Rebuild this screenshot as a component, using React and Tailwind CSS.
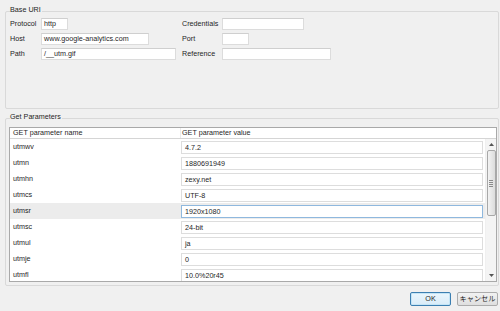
const params = [
  { name: 'utmwv', value: '4.7.2' },
  { name: 'utmn', value: '1880691949' },
  { name: 'utmhn', value: 'zexy.net' },
  { name: 'utmcs', value: 'UTF-8' },
  { name: 'utmsr', value: '1920x1080', selected: true },
  { name: 'utmsc', value: '24-bit' },
  { name: 'utmul', value: 'ja' },
  { name: 'utmje', value: '0' },
  { name: 'utmfl', value: '10.0%20r45' },
];

const Field = ({ value, width }) => (
  <div
    className="h-[12px] bg-white border border-[#dcdcdc] border-t-[#cfcfcf] pl-[2px] flex items-center leading-none"
    style={{ width }}
  >
    {value}
  </div>
);

const Label = ({ children }) => (
  <div className="h-[12px] flex items-center leading-none">{children}</div>
);

export default function App() {
  return (
    <div className="w-[500px] h-[311px] bg-[#f0f0f0] overflow-hidden pl-[5px] pr-[1px] text-[7.2px] text-[#1f1f1f] font-['Liberation_Sans','Noto_Sans_CJK_JP',sans-serif]">
      {/* Base URI */}
      <div className="relative mt-[11px] h-[98px] border border-[#d9d9d9] rounded-[2px]">
        <div className="absolute -top-[6px] left-[4px] leading-none bg-[#f0f0f0] pr-[1px]">Base URI</div>
        <div className="grid grid-cols-[31px_141px_40px_1fr] gap-y-[3px] pt-[6px] pl-[4px]">
          <Label>Protocol</Label>
          <Field value="http" width={27} />
          <Label>Credentials</Label>
          <Field value="" width={82} />

          <Label>Host</Label>
          <Field value="www.google-analytics.com" width={108} />
          <Label>Port</Label>
          <Field value="" width={27} />

          <Label>Path</Label>
          <Field value="/__utm.gif" width={135} />
          <Label>Reference</Label>
          <Field value="" width={109} />
        </div>
      </div>

      {/* Get Parameters */}
      <div className="relative mt-[9px] h-[168px] border border-[#d9d9d9] rounded-[2px] pt-[8px] pl-[3px]">
        <div className="absolute -top-[6px] left-[4px] leading-none bg-[#f0f0f0] pr-[1px]">Get Parameters</div>
        <div className="w-[488px] h-[155px] border border-[#a9a9a9] bg-white flex flex-col overflow-hidden">
          <div className="h-[11px] shrink-0 flex items-center border-b border-[#d5d5d5] leading-none">
            <div className="w-[171px] pl-[3px] border-r border-[#ececec] h-full flex items-center">GET parameter name</div>
            <div className="pl-[1px]">GET parameter value</div>
          </div>
          <div className="flex flex-1 min-h-0">
            <div className="w-[475px] overflow-hidden">
              {params.map((p) => (
                <div
                  key={p.name}
                  className={`h-[16px] flex ${p.selected ? 'bg-[#ececec]' : 'bg-white'}`}
                >
                  <div className="w-[171px] pl-[3px] flex items-center leading-none">{p.name}</div>
                  <div
                    className={`w-[302px] h-[13px] mt-[2px] bg-white border pl-[3px] flex items-center leading-none ${
                      p.selected ? 'border-[#8fb8de]' : 'border-[#dddddd]'
                    }`}
                  >
                    {p.value}
                  </div>
                </div>
              ))}
            </div>
            {/* scrollbar */}
            <div className="w-[11px] bg-[#f4f4f4] border-l border-[#f0f0f0] flex flex-col items-center">
              <div className="h-[11px] w-full flex items-center justify-center">
                <svg width="5" height="3" viewBox="0 0 5 3"><path d="M0 3 L2.5 0 L5 3 Z" fill="#555" /></svg>
              </div>
              <div className="w-[9px] h-[66px] rounded-[2px] border border-[#a8a8a8] bg-gradient-to-r from-[#f3f3f3] to-[#dcdcdc] flex items-center justify-center">
                <div className="flex flex-col gap-[1px]">
                  <div className="w-[4px] h-px bg-[#8a8a8a]" />
                  <div className="w-[4px] h-px bg-[#8a8a8a]" />
                  <div className="w-[4px] h-px bg-[#8a8a8a]" />
                  <div className="w-[4px] h-px bg-[#8a8a8a]" />
                </div>
              </div>
              <div className="flex-1" />
              <div className="h-[11px] w-full flex items-center justify-center">
                <svg width="5" height="3" viewBox="0 0 5 3"><path d="M0 0 L2.5 3 L5 0 Z" fill="#555" /></svg>
              </div>
            </div>
          </div>
        </div>
      </div>

      {/* buttons */}
      <div className="flex justify-end gap-[6px] mt-[6px] pr-[1px]">
        <button className="w-[41px] h-[14px] rounded-[2px] border border-[#3c7fb1] bg-gradient-to-b from-[#eaf6fd] to-[#d9ecf8] shadow-[inset_0_0_0_1px_#c4e5f6] leading-none text-[7.2px]">
          OK
        </button>
        <button className="w-[41px] h-[14px] rounded-[2px] border border-[#acacac] bg-gradient-to-b from-[#f2f2f2] to-[#dfdfdf] leading-none text-[7.2px]">
          キャンセル
        </button>
      </div>
    </div>
  );
}
